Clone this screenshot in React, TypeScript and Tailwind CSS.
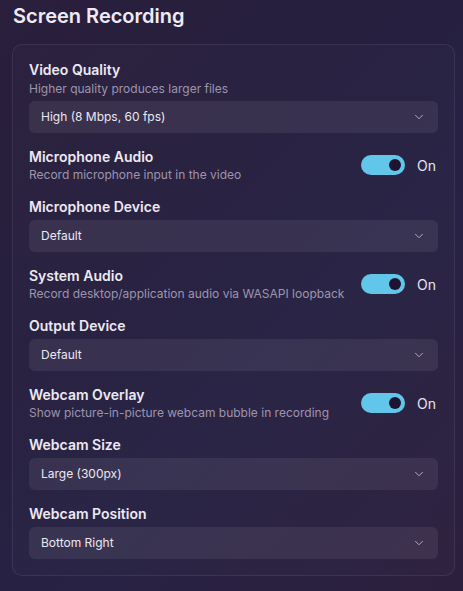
import { ChevronDown } from "lucide-react";

type Item =
  | { kind: "select"; label: string; hint?: string; value: string }
  | { kind: "toggle"; label: string; hint: string; on: boolean };

const items: Item[] = [
  { kind: "select", label: "Video Quality", hint: "Higher quality produces larger files", value: "High (8 Mbps, 60 fps)" },
  { kind: "toggle", label: "Microphone Audio", hint: "Record microphone input in the video", on: true },
  { kind: "select", label: "Microphone Device", value: "Default" },
  { kind: "toggle", label: "System Audio", hint: "Record desktop/application audio via WASAPI loopback", on: true },
  { kind: "select", label: "Output Device", value: "Default" },
  { kind: "toggle", label: "Webcam Overlay", hint: "Show picture-in-picture webcam bubble in recording", on: true },
  { kind: "select", label: "Webcam Size", value: "Large (300px)" },
  { kind: "select", label: "Webcam Position", value: "Bottom Right" },
];

function Select({ value }: { value: string }) {
  return (
    <div className="flex h-[32px] items-center justify-between rounded-[6px] bg-white/[0.07] pl-3 pr-[12px]">
      <span className="text-[12px] text-[#ece8f2]">{value}</span>
      <ChevronDown className="h-[14px] w-[14px] text-[#b9b2c8]" strokeWidth={1.6} />
    </div>
  );
}

function Toggle({ on }: { on: boolean }) {
  return (
    <div className="mr-[2px] flex items-center gap-3">
      <div className="flex h-[20px] w-[44px] items-center justify-end rounded-full bg-[#62c6ea] pr-[4px]">
        <div className="h-[12px] w-[12px] rounded-full bg-[#1b1530]" />
      </div>
      <span className="text-[14px] text-[#e8e4ef]">{on ? "On" : "Off"}</span>
    </div>
  );
}

function Setting({ item }: { item: Item }) {
  if (item.kind === "toggle") {
    return (
      <div className="flex items-center justify-between">
        <div className="flex flex-col">
          <span className="text-[14px] font-semibold leading-[20px] text-[#ede9f3]">{item.label}</span>
          <span className="text-[12px] leading-[16px] text-[#9d95ad]">{item.hint}</span>
        </div>
        <Toggle on={item.on} />
      </div>
    );
  }
  return (
    <div className="flex flex-col">
      <span className="text-[14px] font-semibold leading-[20px] text-[#ede9f3]">{item.label}</span>
      {item.hint && (
        <span className="mt-[1px] text-[12px] leading-[16px] text-[#9d95ad]">{item.hint}</span>
      )}
      <div className={item.hint ? "mt-[4px]" : "mt-[3px]"}>
        <Select value={item.value} />
      </div>
    </div>
  );
}

export default function App() {
  return (
    <div className="min-h-[591px] bg-[linear-gradient(135deg,#2a1f3c_0%,#261f3f_40%,#272244_60%,#2c1f3d_100%)] pt-[2px] pr-[8px] pb-4 pl-[12px] font-['Inter',sans-serif]">
      <h1 className="ml-[1px] text-[20px] font-semibold leading-[28px] text-[#efebf5]">Screen Recording</h1>
      <div className="mt-[14px] rounded-[10px] border border-white/[0.08] bg-white/[0.015] px-4 pt-[15px] pb-4">
        <div className="flex flex-col gap-[14px]">
          {items.map((item) => (
            <Setting key={item.label} item={item} />
          ))}
        </div>
      </div>
    </div>
  );
}
